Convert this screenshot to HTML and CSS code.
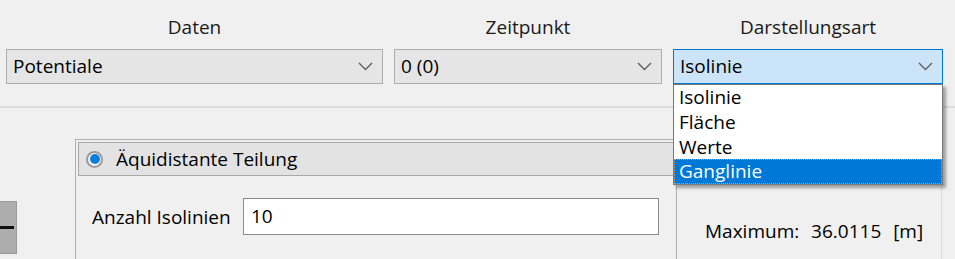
FILE: index.html
```html
<!DOCTYPE html>
<html>
<head>
<meta charset="utf-8">
<link rel="stylesheet" href="styles.css">
</head>
<body>
<div class="top">
  <div class="field">
    <div class="label">Daten</div>
    <div class="combo"><span>Potentiale</span><svg class="chev" width="15" height="9" viewBox="0 0 15 9"><path d="M1 1 L7.5 7.5 L14 1" fill="none" stroke="#606060" stroke-width="1.4"/></svg></div>
  </div>
  <div class="field">
    <div class="label">Zeitpunkt</div>
    <div class="combo"><span>0 (0)</span><svg class="chev" width="15" height="9" viewBox="0 0 15 9"><path d="M1 1 L7.5 7.5 L14 1" fill="none" stroke="#606060" stroke-width="1.4"/></svg></div>
  </div>
  <div class="field dd">
    <div class="label">Darstellungsart</div>
    <div class="combo active"><span>Isolinie</span><svg class="chev" width="15" height="9" viewBox="0 0 15 9"><path d="M1 1 L7.5 7.5 L14 1" fill="none" stroke="#606060" stroke-width="1.4"/></svg></div>
    <div class="popup">
      <div class="item">Isolinie</div>
      <div class="item">Fläche</div>
      <div class="item">Werte</div>
      <div class="item sel">Ganglinie</div>
    </div>
  </div>
</div>
<div class="sep"></div>
<div class="main">
  <div class="side">
    <div class="minus"><div class="bar"></div></div>
  </div>
  <div class="group">
    <div class="ghead">
      <span class="radio"><span class="dot"></span></span>
      <span>Äquidistante Teilung</span>
    </div>
    <div class="row">
      <span class="rlabel">Anzahl Isolinien</span>
      <div class="input">10</div>
    </div>
  </div>
  <div class="panel">
    <div class="maxline">Maximum:  36.0115  [m]</div>
  </div>
</div>
</body>
</html>
```

FILE: styles.css
```css
html, body {
  margin: 0;
  padding: 0;
}
body {
  width: 955px;
  height: 259px;
  overflow: hidden;
  background: #f0f0f0;
  font-family: "Open Sans", "Noto Sans", sans-serif;
  font-size: 19px;
  color: #000;
}
.top {
  display: grid;
  grid-template-columns: 377px 268px 270px;
  column-gap: 11px;
  padding-left: 6px;
}
.field {
  display: flex;
  flex-direction: column;
}
.dd {
  position: relative;
}
.label {
  padding-top: 14px;
  height: 26px;
  line-height: 26px;
  margin-bottom: 9px;
  text-align: center;
  color: #1a1a1a;
}
.combo {
  height: 33px;
  border: 1px solid #adadad;
  background: #e5e5e5;
  display: flex;
  align-items: center;
  justify-content: space-between;
  padding: 0 9px 0 6px;
  line-height: 33px;
}
.combo.active {
  background: #cce4f7;
  border-color: #0078d7;
}
.chev {
  display: block;
}
.popup {
  position: absolute;
  left: 0;
  top: 84px;
  width: 268px;
  height: 99px;
  border: 1px solid #7a7a7a;
  background: #fff;
  box-shadow: 3px 3px 3px rgba(0, 0, 0, 0.35);
  z-index: 5;
}
.item {
  height: 24.75px;
  line-height: 24.75px;
  padding-left: 5px;
  box-sizing: border-box;
}
.item.sel {
  background: #0078d7;
  color: #fff;
  border: 1px dotted #e09a50;
  padding-left: 4px;
  line-height: 22.75px;
}
.sep {
  margin-top: 22px;
  height: 2px;
  background: #dcdcdc;
}
.main {
  display: flex;
  padding-top: 31px;
}
.side {
  width: 75px;
  flex: none;
}
.minus {
  margin-top: 62px;
  width: 16px;
  height: 51px;
  background: #adadad;
  border: 1px solid #9a9a9a;
  border-left: none;
  display: flex;
  align-items: center;
}
.bar {
  width: 14px;
  height: 3px;
  background: #111;
}
.group {
  width: 596px;
  height: 150px;
  flex: none;
  border: 1px solid #b0b0b0;
  padding: 2px 2px 0 2px;
}
.ghead {
  height: 32px;
  border: 1px solid #a8a8a8;
  background: #e3e3e3;
  display: flex;
  align-items: center;
  padding-left: 7px;
  gap: 13px;
}
.radio {
  width: 13px;
  height: 13px;
  border: 2px solid #9a9a9a;
  border-radius: 50%;
  background: #f4f4f4;
  display: flex;
  align-items: center;
  justify-content: center;
}
.dot {
  width: 10px;
  height: 10px;
  border-radius: 50%;
  background: #0a7fd8;
}
.row {
  display: flex;
  align-items: center;
  margin-top: 22px;
  padding-left: 14px;
  gap: 10px;
}
.rlabel {
  width: 141px;
  white-space: nowrap;
}
.input {
  width: 407px;
  height: 35px;
  border: 1px solid #8a8a8a;
  background: #fff;
  line-height: 35px;
  padding-left: 7px;
}
.panel {
  width: 264px;
  height: 150px;
  flex: none;
  border-right: 1px solid #d9d9d9;
}
.maxline {
  white-space: pre;
  padding-left: 28px;
  padding-top: 79px;
  line-height: 26px;
  word-spacing: 1px;
}
```
